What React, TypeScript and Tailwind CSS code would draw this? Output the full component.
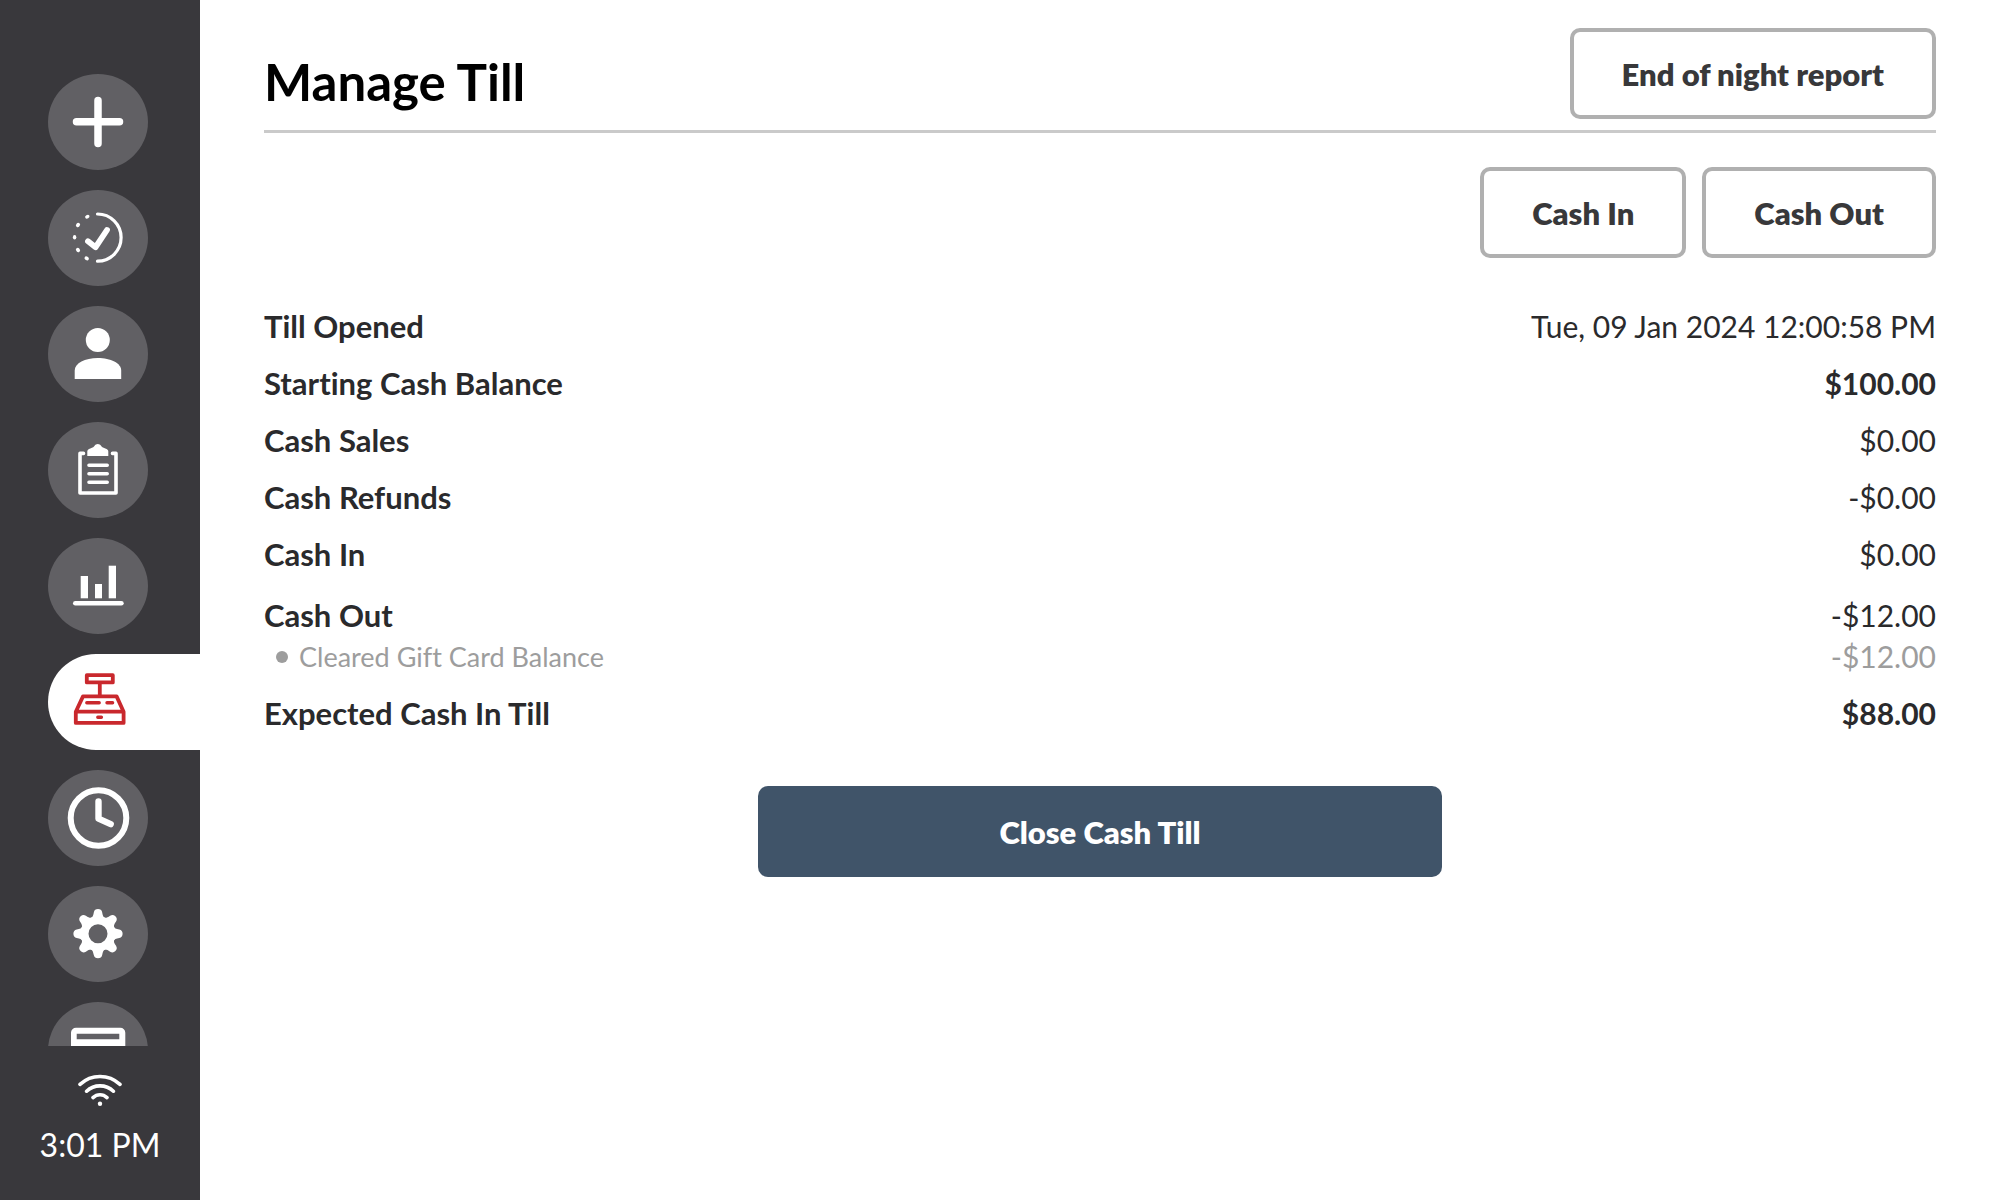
import { useState } from "react";
import type { ReactNode } from "react";

/* ================= TYPE ================= */
type NavItem = {
  id: string;
  label: string;
  icon: ReactNode;
};

type Row = {
  label: string;
  value: string;
  bold?: boolean;
  details?: { label: string; value: string }[];
};

/* ================= ICONS ================= */
const teeth = [0, 45, 90, 135, 180, 225, 270, 315];

const stroke = {
  fill: "none",
  stroke: "currentColor",
  strokeLinecap: "round",
  strokeLinejoin: "round",
} as const;

const plusIcon = <path {...stroke} strokeWidth="7.5" d="M50 26.5v43M28.5 47.7h43" />;

const ordersIcon = (
  <>
    <path {...stroke} strokeWidth="3.2" d="M49.5 24a23.6 23.6 0 0 1 0 47.2" />
    <path {...stroke} strokeWidth="5.8" d="M40 51.2l7.6 6 11.4-17.2" />
    <g fill="currentColor">
      <ellipse cx="39.3" cy="26.7" rx="2.3" ry="1.8" transform="rotate(-30 39.3 26.7)" />
      <ellipse cx="30" cy="35" rx="2.3" ry="1.9" transform="rotate(-50 30 35)" />
      <ellipse cx="26.6" cy="47.3" rx="1.7" ry="2.2" />
      <ellipse cx="30" cy="60" rx="2.3" ry="1.9" transform="rotate(50 30 60)" />
      <ellipse cx="38.7" cy="68.4" rx="2.3" ry="1.8" transform="rotate(30 38.7 68.4)" />
    </g>
  </>
);

const customerIcon = (
  <g fill="currentColor">
    <circle cx="49.8" cy="34" r="12" />
    <path d="M26.7 73V64.5C26.7 57 37 52 49.8 52s23.4 5 23.4 12.5V73z" />
  </g>
);

const clipboardIcon = (
  <>
    <path {...stroke} strokeWidth="3.6" d="M35.5 31.4H32V71h36V31.4h-3.5" />
    <path {...stroke} strokeWidth="3.6" d="M41 43.2h18.2M41 51.7h18.2M41 60.2h18.2" />
    <path
      fill="currentColor"
      d="M39.3 34v-4.5c0-1.6 1-2.6 3-3.1 2.6-.7 3.6-1.4 4.3-2.6.6-1.2 1.9-1.9 3.2-1.9s2.6.7 3.2 1.9c.7 1.2 1.7 1.9 4.3 2.6 2 .5 3 1.5 3 3.1V34z"
    />
  </>
);

const reportsIcon = (
  <g fill="currentColor">
    <rect x="32.7" y="38" width="7.3" height="22.3" />
    <rect x="47" y="46" width="7" height="14.3" />
    <rect x="60.7" y="27.7" width="7.3" height="32.6" />
    <rect x="25" y="63" width="50.7" height="4.6" rx="2.3" />
  </g>
);

const tillIcon = (
  <>
    <path {...stroke} strokeWidth="3.8" d="M38.8 21.2h26v7.2h-26zM51.8 28.4v13.8" />
    <path {...stroke} strokeWidth="3.8" d="M35 42.4h33.6l7 15.3v11.2H27.8V57.7zM27.8 57.7h47.8" />
    <path {...stroke} strokeWidth="3.4" d="M38.8 48.8h12.4M59 48.8h5.6M49.8 63.3h3.6" />
  </>
);

const clockIcon = (
  <>
    <circle {...stroke} strokeWidth="6" cx="50.5" cy="48" r="27.8" />
    <path {...stroke} strokeWidth="6.4" d="M50.5 31.5v17.2l12.2 5.5" />
  </>
);

const settingsIcon = (
  <g transform="translate(50 47.7)">
    <circle r="13.5" fill="none" stroke="currentColor" strokeWidth="8" />
    {teeth.map((angle) => (
      <path
        key={angle}
        transform={`rotate(${angle})`}
        fill="currentColor"
        d="M-8-15C-5.2-16.6-4.9-18-4.2-21.3a4.3 4.2 0 0 1 8.4 0C4.9-18 5.2-16.6 8-15z"
      />
    ))}
  </g>
);

const drawerIcon = (
  <path
    fill="currentColor"
    fillRule="evenodd"
    d="M23 75V30.7a5 5 0 0 1 5-5h44.3a5 5 0 0 1 5 5V75zM28.7 31.7v5.6h42.6v-5.6z"
  />
);

function WifiIcon() {
  return (
    <svg viewBox="0 0 44 32" className="h-8 w-11" aria-hidden="true">
      <path
        {...stroke}
        strokeWidth="3.6"
        d="M2 10.4C7.5 5.3 14.3 2.5 22 2.5s14.5 2.8 20 7.9M8.6 17.2c3.7-3.5 8.2-5.3 13.4-5.3s9.7 1.8 13.4 5.3M15 23.6c2-1.9 4.3-2.9 7-2.9s5 1 7 2.9"
      />
      <circle cx="22" cy="29.7" r="2.2" fill="currentColor" />
    </svg>
  );
}

/* ================= DATA ================= */
const navItems: NavItem[] = [
  { id: "new", label: "New order", icon: plusIcon },
  { id: "orders", label: "Orders", icon: ordersIcon },
  { id: "customers", label: "Customers", icon: customerIcon },
  { id: "list", label: "Order list", icon: clipboardIcon },
  { id: "reports", label: "Reports", icon: reportsIcon },
  { id: "till", label: "Manage till", icon: tillIcon },
  { id: "clock", label: "Time clock", icon: clockIcon },
  { id: "settings", label: "Settings", icon: settingsIcon },
  { id: "drawer", label: "Drawer", icon: drawerIcon },
];

const rows: Row[] = [
  { label: "Till Opened", value: "Tue, 09 Jan 2024 12:00:58 PM" },
  { label: "Starting Cash Balance", value: "$100.00", bold: true },
  { label: "Cash Sales", value: "$0.00" },
  { label: "Cash Refunds", value: "-$0.00" },
  { label: "Cash In", value: "$0.00" },
  {
    label: "Cash Out",
    value: "-$12.00",
    details: [{ label: "Cleared Gift Card Balance", value: "-$12.00" }],
  },
  { label: "Expected Cash In Till", value: "$88.00", bold: true },
];

/* ================= COMPONENTS ================= */
function OutlineButton({ children }: { children: ReactNode }) {
  return (
    <button
      type="button"
      className="rounded-[10px] border-4 border-[#b0b0b0] bg-white px-12 pt-6 pb-[23px] text-[31px] leading-9 font-extrabold text-[#38383a]"
    >
      {children}
    </button>
  );
}

function Sidebar() {
  const [active, setActive] = useState("till");

  return (
    <aside className="flex w-[200px] shrink-0 flex-col bg-[#39383c] text-white">
      <nav className="flex min-h-0 flex-1 flex-col gap-5 overflow-hidden pt-[74px] pl-12">
        {navItems.map((item) => (
          <button
            key={item.id}
            type="button"
            aria-label={item.label}
            onClick={() => setActive(item.id)}
            className={
              item.id === active
                ? "h-24 w-full shrink-0 rounded-l-[48px] bg-white text-[#c9282d]"
                : "h-24 w-[100px] shrink-0 rounded-[50%] bg-[#616064]"
            }
          >
            <svg viewBox="0 0 100 96" className="h-24 w-[100px]" aria-hidden="true">
              {item.icon}
            </svg>
          </button>
        ))}
      </nav>
      <div className="flex flex-col items-center gap-4 pt-7 pb-8">
        <WifiIcon />
        <p className="text-[32px] leading-[46px]">3:01 PM</p>
      </div>
    </aside>
  );
}

export default function App() {
  return (
    <div className="flex h-screen bg-white font-['Lato',sans-serif] [font-variant-ligatures:none]">
      <Sidebar />

      <main className="min-w-0 flex-1 px-16 pt-7">
        {/* TITLE */}
        <header className="flex items-center justify-between border-b-3 border-[#cacaca] pb-[11px]">
          <h1 className="pt-4 text-[51px] leading-[56px] font-bold text-black">Manage Till</h1>
          <OutlineButton>End of night report</OutlineButton>
        </header>

        {/* ACTIONS */}
        <div className="mt-[34px] flex justify-end gap-4">
          <OutlineButton>Cash In</OutlineButton>
          <OutlineButton>Cash Out</OutlineButton>
        </div>

        {/* SUMMARY */}
        <dl className="mt-12 flex flex-col gap-4 text-[30px] leading-[41px] text-[#2a2a2c]">
          {rows.map((row) => (
            <div key={row.label} className={row.details ? "pt-1" : undefined}>
              <div className="flex justify-between">
                <dt className="text-[31px] font-bold">{row.label}</dt>
                <dd className={row.bold ? "font-bold" : undefined}>{row.value}</dd>
              </div>
              {row.details?.map((detail) => (
                <div key={detail.label} className="flex justify-between text-[#9d9d9d]">
                  <dt className="flex items-center gap-[11px] pl-3 text-[27px]">
                    <span className="h-3 w-3 rounded-full bg-[#9d9d9d]" />
                    {detail.label}
                  </dt>
                  <dd>{detail.value}</dd>
                </div>
              ))}
            </div>
          ))}
        </dl>

        {/* CLOSE */}
        <button
          type="button"
          className="mx-auto mt-[52px] block w-[684px] max-w-full rounded-[10px] bg-[#405469] pt-7 pb-[27px] text-[31px] leading-9 font-extrabold text-white"
        >
          Close Cash Till
        </button>
      </main>
    </div>
  );
}
